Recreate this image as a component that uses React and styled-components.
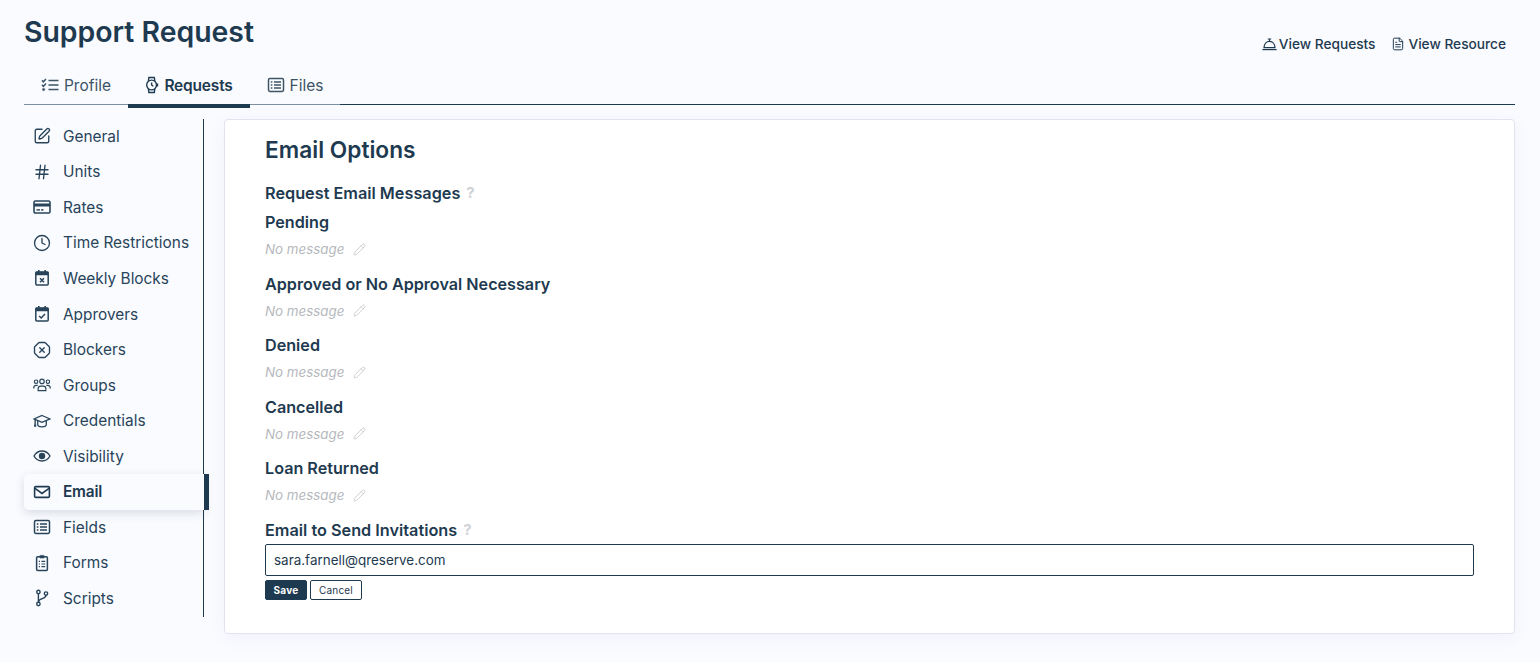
import React from "react";
import styled, { createGlobalStyle } from "styled-components";
import { SquarePen, Hash, Clock, OctagonX, FileText, Pencil } from "lucide-react";

const navy = "#1e3a50";

const GlobalStyle = createGlobalStyle`
  html, body {
    margin: 0;
    padding: 0;
    background: #fafbff;
    font-family: "Inter", "Liberation Sans", sans-serif;
    color: ${navy};
  }
  * { box-sizing: border-box; }
`;

const RatesIcon = ({ size = 18 }) => (
  <svg width={size} height={size} viewBox="0 0 18 18">
    <rect x="1" y="3" width="16" height="12" rx="1.4" fill="none" stroke="currentColor" strokeWidth="1.6" />
    <rect x="1" y="5.5" width="16" height="3" fill="currentColor" />
    <rect x="3.5" y="11.2" width="3.5" height="1.4" fill="currentColor" />
    <rect x="8" y="11.2" width="2.5" height="1.4" fill="currentColor" />
  </svg>
);

const ListBoxIcon = ({ size = 18 }) => (
  <svg width={size} height={size} viewBox="0 0 18 18" fill="none" stroke="currentColor">
    <rect x="1.5" y="2.5" width="15" height="13" rx="1.4" strokeWidth="1.5" />
    <path d="M7 6h7M7 9h7M7 12h7" strokeWidth="1.4" />
    <path d="M3.8 6h1.6M3.8 9h1.6M3.8 12h1.6" strokeWidth="1.5" />
  </svg>
);

const EyeIcon = ({ size = 18 }) => (
  <svg width={size} height={size} viewBox="0 0 18 18">
    <path d="M1 9c2-3.4 4.7-5 8-5s6 1.6 8 5c-2 3.4-4.7 5-8 5s-6-1.6-8-5z" fill="none" stroke="currentColor" strokeWidth="1.4" />
    <circle cx="9" cy="9" r="3.2" fill="currentColor" />
  </svg>
);

const CalendarBase = ({ children }) => (
  <svg width="18" height="18" viewBox="0 0 18 18" fill="none" stroke="currentColor">
    <rect x="2.8" y="3" width="12.4" height="13" rx="1" strokeWidth="1.5" />
    <rect x="2.8" y="3" width="12.4" height="3" fill="currentColor" strokeWidth="0.5" />
    <path d="M5.8 1v2.5M12.2 1v2.5" strokeWidth="1.6" />
    {children}
  </svg>
);

const CalendarXIcon = () => (
  <CalendarBase>
    <path d="M7 9.2l4 4M11 9.2l-4 4" strokeWidth="1.5" />
  </CalendarBase>
);

const CalendarCheckIcon = () => (
  <CalendarBase>
    <path d="M6.2 11l2 2 3.8-4" strokeWidth="1.5" />
  </CalendarBase>
);

const GroupsIcon = () => (
  <svg width="21" height="18" viewBox="0 0 21 18" fill="none" stroke="currentColor" strokeWidth="1.35">
    <circle cx="10.5" cy="4.8" r="2.6" />
    <circle cx="3.6" cy="5.2" r="2" />
    <circle cx="17.4" cy="5.2" r="2" />
    <path d="M6 15.6v-2.2c0-1.8 1.2-3 3-3h3c1.8 0 3 1.2 3 3v2.2z" />
    <path d="M.8 13c0-2.2 1.1-3.5 2.9-3.5h1.8M20.2 13c0-2.2-1.1-3.5-2.9-3.5h-1.8" />
  </svg>
);

const CapIcon = () => (
  <svg width="21" height="18" viewBox="0 0 21 18" fill="none" stroke="currentColor" strokeWidth="1.5">
    <path d="M10.5 2.6l9.4 4-9.4 4-9.4-4z" />
    <path d="M5.5 9v4.2c0 1.4 2.4 2.6 5 2.6s5-1.2 5-2.6V9" />
    <path d="M2.5 7.2v6" strokeWidth="1.6" />
    <path d="M2.5 12.8v3" strokeWidth="2.4" />
  </svg>
);

const MailIcon = () => (
  <svg width="18" height="18" viewBox="0 0 18 18" fill="none" stroke="currentColor" strokeWidth="1.6">
    <rect x="1.6" y="3.6" width="14.8" height="10.8" rx="1.2" />
    <path d="M2 5.4l7 5 7-5" />
  </svg>
);

const ClipboardIcon = () => (
  <svg width="18" height="18" viewBox="0 0 18 18" fill="none" stroke="currentColor">
    <rect x="3.6" y="2.8" width="10.8" height="13.6" rx="1.2" strokeWidth="1.5" />
    <rect x="6.8" y="1.4" width="4.4" height="2.6" rx="0.6" fill="currentColor" strokeWidth="0.6" />
    <path d="M8.4 7.4h3.8M8.4 10h3.8M8.4 12.6h3.8" strokeWidth="1.1" />
    <path d="M5.8 7.4h1.2M5.8 10h1.2M5.8 12.6h1.2" strokeWidth="1.1" />
  </svg>
);

const BranchIcon = () => (
  <svg width="18" height="18" viewBox="0 0 18 18" fill="none" stroke="currentColor" strokeWidth="1.4">
    <circle cx="5.4" cy="3" r="1.7" />
    <circle cx="5.4" cy="15" r="1.7" />
    <circle cx="13" cy="4.6" r="1.7" />
    <path d="M5.4 4.7v8.6" />
    <path d="M13 6.3c0 4.2-7.6 2.6-7.6 7" />
  </svg>
);

const ChecksIcon = () => (
  <svg width="18" height="18" viewBox="0 0 18 18" fill="none" stroke="currentColor" strokeWidth="1.5">
    <path d="M7.5 4.5H17.5M7.5 9H17.5M7.5 13.5H17.5" />
    <path d="M1 4.4l1.4 1.4L5 3" />
    <path d="M1 8.9l1.4 1.4L5 7.5" />
    <circle cx="2.6" cy="13.5" r="1.1" fill="currentColor" strokeWidth="0.8" />
  </svg>
);

const WatchIcon = () => (
  <svg width="14" height="18" viewBox="0 0 14 18" fill="none" stroke="currentColor" strokeWidth="1.4">
    <circle cx="6.6" cy="9" r="4.9" />
    <path d="M6.6 6.4V9l1.7 1.2" />
    <path d="M3.4 4.8l.5-3.3h5.4l.5 3.3M3.4 13.2l.5 3.3h5.4l.5-3.3" />
    <path d="M12.6 7.6v2.8" strokeWidth="1.2" />
  </svg>
);

const BellIcon = () => (
  <svg width="15" height="14" viewBox="0 0 15 14" fill="none" stroke="currentColor" strokeWidth="1.2">
    <path d="M2 10.6C2.2 7 4.4 4.4 7.5 4.4s5.3 2.6 5.5 6.2z" />
    <path d="M.4 12.6h14.2" />
    <path d="M5.8 2h3.4M7.5 2v2.4" />
  </svg>
);

const navItems = [
  { label: "General", icon: SquarePen },
  { label: "Units", icon: Hash },
  { label: "Rates", icon: RatesIcon },
  { label: "Time Restrictions", icon: Clock },
  { label: "Weekly Blocks", icon: CalendarXIcon },
  { label: "Approvers", icon: CalendarCheckIcon },
  { label: "Blockers", icon: OctagonX },
  { label: "Groups", icon: GroupsIcon },
  { label: "Credentials", icon: CapIcon },
  { label: "Visibility", icon: EyeIcon },
  { label: "Email", icon: MailIcon, active: true },
  { label: "Fields", icon: ListBoxIcon },
  { label: "Forms", icon: ClipboardIcon },
  { label: "Scripts", icon: BranchIcon },
];

const messages = ["Pending", "Approved or No Approval Necessary", "Denied", "Cancelled", "Loan Returned"];

const Page = styled.div`
  width: 1540px;
  height: 662px;
  padding: 0 25px 0 24px;
  overflow: hidden;
`;

const Header = styled.div`
  display: flex;
  justify-content: space-between;
  height: 70px;
`;

const Title = styled.h1`
  margin: 14px 0 0;
  font-size: 28.4px;
  line-height: 36px;
  font-weight: 600;
`;

const HeaderLinks = styled.div`
  display: flex;
  gap: 16px;
  padding: 36px 9px 0 0;
`;

const HeaderLink = styled.a`
  display: flex;
  align-items: center;
  gap: ${(p) => p.$gap}px;
  height: 16px;
  font-size: 13.7px;
  font-weight: 500;
`;

const Tabs = styled.div`
  display: flex;
  height: 35px;
  border-bottom: 1px solid ${navy};
  margin-bottom: 14px;
`;

const Tab = styled.div`
  display: flex;
  align-items: center;
  justify-content: center;
  gap: 5px;
  position: relative;
  height: 35px;
  width: ${(p) => p.$width}px;
  padding-bottom: 4px;
  font-size: 15.5px;
  font-weight: ${(p) => (p.$active ? 600 : 400)};
  letter-spacing: ${(p) => (p.$active ? "-0.2px" : "0")};
  color: ${(p) => (p.$active ? navy : "#3d5466")};
  border-bottom: 1px solid #7d8fa0;
  &::after {
    content: "";
    display: ${(p) => (p.$active ? "block" : "none")};
    position: absolute;
    left: 0;
    right: 0;
    bottom: -4px;
    height: 4px;
    background: ${navy};
  }
`;

const Body = styled.div`
  display: flex;
  align-items: flex-start;
  gap: 20px;
`;

const Side = styled.nav`
  width: 180px;
  height: 498px;
  border-right: 1px solid ${navy};
  flex-shrink: 0;
`;

const NavItem = styled.div`
  display: flex;
  align-items: center;
  position: relative;
  height: 35.56px;
  width: 180px;
  padding: 0 0 1px 9px;
  gap: 12px;
  font-size: 15.4px;
  font-weight: ${(p) => (p.$active ? 600 : 400)};
  letter-spacing: ${(p) => (p.$active ? "-0.2px" : "0")};
  color: ${(p) => (p.$active ? navy : "#28445a")};
  background: ${(p) => (p.$active ? "#fafbff" : "transparent")};
  border-radius: ${(p) => (p.$active ? "5px 0 0 5px" : "0")};
  box-shadow: ${(p) => (p.$active ? "0 3px 10px rgba(30, 58, 80, 0.16)" : "none")};
  &::after {
    content: "";
    display: ${(p) => (p.$active ? "block" : "none")};
    position: absolute;
    top: 0;
    bottom: 0;
    right: -5px;
    width: 5px;
    background: ${navy};
  }
`;

const IconSlot = styled.span`
  display: flex;
  align-items: center;
  justify-content: center;
  width: 18px;
  height: 18px;
  flex-shrink: 0;
`;

const Card = styled.main`
  flex: 1;
  height: 515px;
  background: #fff;
  border: 1px solid #e2e3f0;
  border-radius: 4px;
  box-shadow: 0 4px 18px rgba(60, 70, 130, 0.05);
  padding: 15px 40px 0;
`;

const CardTitle = styled.h2`
  margin: 0 0 18px;
  font-size: 22.7px;
  line-height: 30px;
  font-weight: 600;
`;

const SectionLabel = styled.div`
  display: flex;
  align-items: center;
  gap: 6px;
  font-size: 16.25px;
  line-height: 20px;
  font-weight: 600;
`;

const Help = styled.span`
  font-size: 15px;
  font-weight: 700;
  color: #cfd1d5;
`;

const MessageGroup = styled.div`
  margin-top: ${(p) => (p.$first ? "9.3px" : "0")};
  height: 61.55px;
`;

const MessageTitle = styled.div`
  font-size: 16.17px;
  line-height: 20px;
  font-weight: 600;
`;

const NoMessage = styled.div`
  display: flex;
  align-items: center;
  gap: 9px;
  margin-top: 7px;
  font-size: 13.35px;
  line-height: 20px;
  font-style: italic;
  color: #b5b8bd;
`;

const EmailInput = styled.input`
  display: block;
  width: 100%;
  height: 32px;
  margin-top: 4px;
  padding: 0 8px;
  border: 1px solid ${navy};
  border-radius: 2px;
  background: #fff;
  color: ${navy};
  font-family: inherit;
  font-size: 13.45px;
  outline: none;
`;

const Buttons = styled.div`
  display: flex;
  gap: 3px;
  margin-top: 4px;
`;

const Button = styled.button`
  height: 20px;
  padding: 0;
  width: ${(p) => p.$width}px;
  border: 1px solid ${navy};
  border-radius: 2px;
  background: ${(p) => (p.$primary ? navy : "#fff")};
  color: ${(p) => (p.$primary ? "#fff" : navy)};
  font-family: inherit;
  font-size: 10px;
  font-weight: ${(p) => (p.$primary ? 700 : 400)};
  letter-spacing: 0.2px;
`;

export default function App() {
  return (
    <Page>
      <GlobalStyle />
      <Header>
        <Title>Support Request</Title>
        <HeaderLinks>
          <HeaderLink $gap={2}>
            <BellIcon />
            View Requests
          </HeaderLink>
          <HeaderLink $gap={3}>
            <FileText size={14} strokeWidth={1.7} />
            View Resource
          </HeaderLink>
        </HeaderLinks>
      </Header>
      <Tabs>
        <Tab $width={104}>
          <ChecksIcon />
          Profile
        </Tab>
        <Tab $width={122} $active>
          <WatchIcon />
          Requests
        </Tab>
        <Tab $width={90}>
          <ListBoxIcon />
          Files
        </Tab>
      </Tabs>
      <Body>
        <Side>
          {navItems.map(({ label, icon: Icon, active }) => (
            <NavItem key={label} $active={active}>
              <IconSlot>
                <Icon size={18} strokeWidth={1.8} />
              </IconSlot>
              {label}
            </NavItem>
          ))}
        </Side>
        <Card>
          <CardTitle>Email Options</CardTitle>
          <SectionLabel>
            Request Email Messages <Help>?</Help>
          </SectionLabel>
          {messages.map((m, i) => (
            <MessageGroup key={m} $first={i === 0}>
              <MessageTitle>{m}</MessageTitle>
              <NoMessage>
                No message
                <Pencil size={13} strokeWidth={1.5} color="#c4c6ca" />
              </NoMessage>
            </MessageGroup>
          ))}
          <SectionLabel>
            Email to Send Invitations <Help>?</Help>
          </SectionLabel>
          <EmailInput defaultValue="sara.farnell@qreserve.com" />
          <Buttons>
            <Button $primary $width={42}>Save</Button>
            <Button $width={52}>Cancel</Button>
          </Buttons>
        </Card>
      </Body>
    </Page>
  );
}
